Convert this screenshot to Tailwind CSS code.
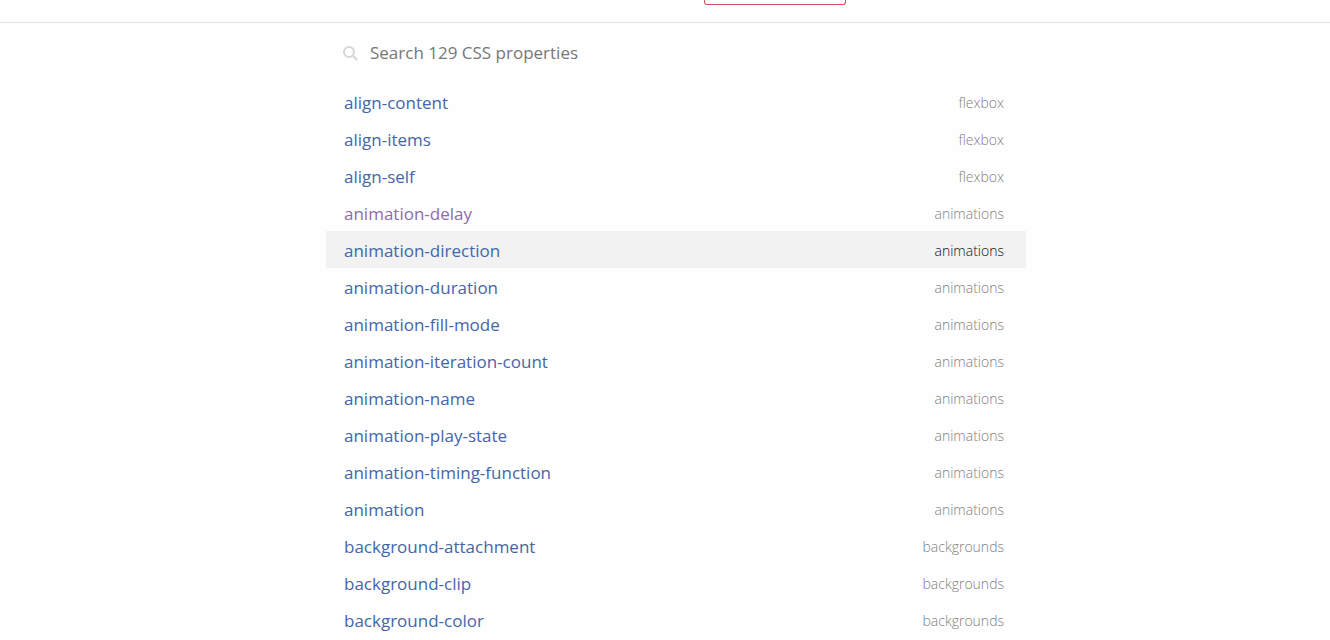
<!DOCTYPE html>
<html lang="en"><head><meta charset="utf-8"><title>CSS properties</title>
<script src="https://cdn.jsdelivr.net/npm/@tailwindcss/browser@4"></script></head>
<body class="h-screen overflow-hidden bg-[#fefefe] font-['Open_Sans','Noto_Sans',sans-serif] text-[#777]">
<header class="flex h-[23px] items-start justify-center border-b border-[#e5e5e5] pl-[220px]">
<button type="button" aria-label="Menu" class="h-[5px] w-[142px] rounded-b-[3px] border border-t-0 border-[#d9505a]"></button>
</header>
<main class="pl-[22px]">
<div class="mx-auto w-full max-w-[700px]">
<label class="mb-4 flex h-11 items-center gap-3 pl-[17px] pr-[22px] pt-4">
<svg class="h-4 w-[15px] shrink-0" viewBox="0 0 15 16" fill="none" stroke="#d6d6d6" stroke-width="2"><circle cx="6" cy="7" r="5"/><path d="m10 11 4 4"/></svg>
<input type="search" aria-label="Search" placeholder="Search 129 CSS properties" class="w-full bg-transparent text-[17px] outline-none placeholder:text-[#777]">
</label>
<ul id="list"></ul>
</div>
</main>
<script>
const rows=[['align-content','flexbox'],['align-items','flexbox'],['align-self','flexbox'],['animation-delay','animations'],['animation-direction','animations'],['animation-duration','animations'],['animation-fill-mode','animations'],['animation-iteration-count','animations'],['animation-name','animations'],['animation-play-state','animations'],['animation-timing-function','animations'],['animation','animations'],['background-attachment','backgrounds'],['background-clip','backgrounds'],['background-color','backgrounds']];
document.getElementById('list').innerHTML=rows.map(([n,c],i)=>`<li><a href="#${n}" class="flex h-[37px] items-center justify-between pl-[18px] pr-[22px] pt-[2px] ${i===4?'bg-[#f2f2f2]':''}"><span class="text-[17px] ${i===3?'text-[#8e6bab]':'text-[#4466a8]'}">${n}</span><span class="text-[14px] font-light ${i===4?'text-[#111]':'text-[#808080]'}">${c}</span></a></li>`).join('');
</script>
</body></html>
